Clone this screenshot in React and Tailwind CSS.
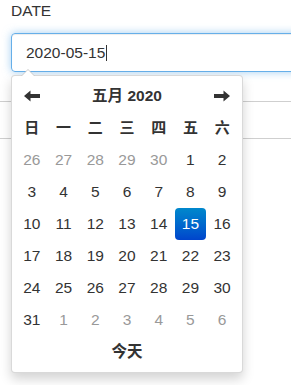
import React from 'react';

const weekdays = ['日', '一', '二', '三', '四', '五', '六'];

function buildDays() {
    const days = [];
    [26, 27, 28, 29, 30].forEach((d) => days.push({ d, muted: true }));
    for (let d = 1; d <= 31; d++) days.push({ d, muted: false, active: d === 15 });
    [1, 2, 3, 4, 5, 6].forEach((d) => days.push({ d, muted: true }));
    return days;
}

function Arrow({ dir }) {
    return (
        <svg width="16" height="12" viewBox="0 0 16 12" className={dir === 'right' ? 'rotate-180' : ''}>
            <path d="M0 6 L6.5 0.5 L6.5 4 L16 4 L16 8 L6.5 8 L6.5 11.5 Z" fill="#333" />
        </svg>
    );
}

export default function App() {
    const days = buildDays();
    return (
        <div className="relative h-[385px] w-[291px] overflow-hidden bg-white font-['Liberation_Sans','Noto_Sans_CJK_SC',sans-serif] text-[#333]">
            <div className="px-[11px]">
                <label className="block text-[15.5px] leading-[22px]">DATE</label>
                <div className="mt-[11px] flex h-[39px] w-[320px] items-center rounded border border-[#66afe9] pl-[14px] text-[15.5px] shadow-[inset_0_1px_1px_rgba(0,0,0,0.075),0_0_8px_rgba(102,175,233,0.6)]">
                    <span>2020-05-15</span>
                    <span className="ml-px h-[16px] w-px bg-[#333]" />
                </div>
            </div>
            <div className="mt-[29px] border-t border-[#cfcfcf]" />
            <div className="h-[37px] border-b border-[#cfcfcf]" />

            <div className="absolute left-[11px] top-[75px] w-[232px] rounded border border-[rgba(0,0,0,0.15)] bg-white p-[4px] shadow-[0_6px_12px_rgba(0,0,0,0.175)]">
                <div className="absolute -top-[7px] left-[9px] h-0 w-0 border-x-[7px] border-b-[7px] border-x-transparent border-b-[#ccc]" />
                <div className="absolute -top-[6px] left-[10px] h-0 w-0 border-x-[6px] border-b-[6px] border-x-transparent border-b-white" />
                <div className="grid w-[222px] grid-cols-7 text-center text-[15.5px]">
                    <div className="flex h-[32px] items-center justify-center">
                        <Arrow dir="left" />
                    </div>
                    <div className="col-span-5 flex h-[32px] items-center justify-center text-[15.5px] font-bold">
                        五月 2020
                    </div>
                    <div className="flex h-[32px] items-center justify-center">
                        <Arrow dir="right" />
                    </div>
                    {weekdays.map((w) => (
                        <div key={w} className="flex h-[32px] items-center justify-center text-[15px] font-bold">
                            {w}
                        </div>
                    ))}
                    {days.map((day, i) => (
                        <div
                            key={i}
                            className={
                                day.active
                                    ? 'flex h-[32px] items-center justify-center rounded bg-gradient-to-b from-[#0088cc] to-[#0044cc] text-white'
                                    : day.muted
                                      ? 'flex h-[32px] items-center justify-center text-[#999]'
                                      : 'flex h-[32px] items-center justify-center'
                            }
                        >
                            {day.d}
                        </div>
                    ))}
                    <div className="col-span-7 flex h-[32px] items-center justify-center text-[15.5px] font-bold">今天</div>
                </div>
            </div>
        </div>
    );
}
